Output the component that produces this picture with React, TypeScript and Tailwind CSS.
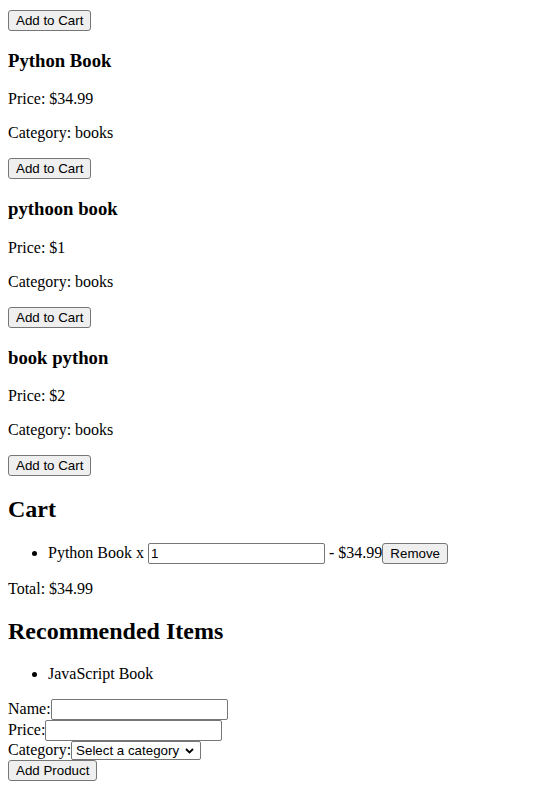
const btn =
  "h-[21px] border border-[#767676] bg-[#efefef] rounded-[3px] px-[7px] text-[13.333px] leading-[normal] font-['Liberation_Sans',Arial,sans-serif] text-black align-baseline";
const field =
  "h-[21px] w-[177px] border border-[#767676] rounded-[2px] px-[2px] text-[13.333px] leading-[normal] font-['Liberation_Sans',Arial,sans-serif] text-black bg-white align-baseline";

const products = [
  { name: "Python Book", price: "34.99" },
  { name: "pythoon book", price: "1" },
  { name: "book python", price: "2" },
];

const App = () => {
  return (
    <div className="min-h-screen bg-white px-2 pb-2 font-['Liberation_Serif','Times_New_Roman',serif] text-[16px] leading-[normal] text-black">
      <div className="pt-[10px]">
        <button className={btn}>Add to Cart</button>
      </div>

      {products.map((p) => (
        <div key={p.name}>
          <h3 className="my-[18.72px] text-[18.72px] font-bold">{p.name}</h3>
          <p className="my-4">Price: ${p.price}</p>
          <p className="my-4">Category: books</p>
          <button className={btn}>Add to Cart</button>
        </div>
      ))}

      <h2 className="my-[19.92px] text-[24px] font-bold">Cart</h2>
      <ul className="my-4 list-disc pl-10">
        <li>
          Python Book x <input className={field} defaultValue="1" /> - $34.99
          <button className={btn}>Remove</button>
        </li>
      </ul>
      <p className="my-4">Total: $34.99</p>

      <h2 className="my-[19.92px] text-[24px] font-bold">Recommended Items</h2>
      <ul className="my-4 list-disc pl-10">
        <li>JavaScript Book</li>
      </ul>

      <form>
        <div>
          <label>Name:</label>
          <input className={field} />
        </div>
        <div>
          <label>Price:</label>
          <input className={field} />
        </div>
        <div>
          <label>Category:</label>
          <span className="relative inline-block align-baseline">
            <select className="h-[19px] w-[130px] appearance-none border border-[#767676] rounded-[2px] bg-white pl-[4px] pr-[18px] text-[13.333px] leading-[normal] font-['Liberation_Sans',Arial,sans-serif] text-black">
              <option>Select a category</option>
              <option>books</option>
            </select>
            <svg
              className="pointer-events-none absolute right-[7px] top-[7px]"
              width="9"
              height="6"
              viewBox="0 0 9 6"
              fill="none"
            >
              <path d="M1 1l3.5 3.5L8 1" stroke="#000" strokeWidth="1.8" />
            </svg>
          </span>
        </div>
        <button className={btn}>Add Product</button>
      </form>
    </div>
  );
};

export default App;
